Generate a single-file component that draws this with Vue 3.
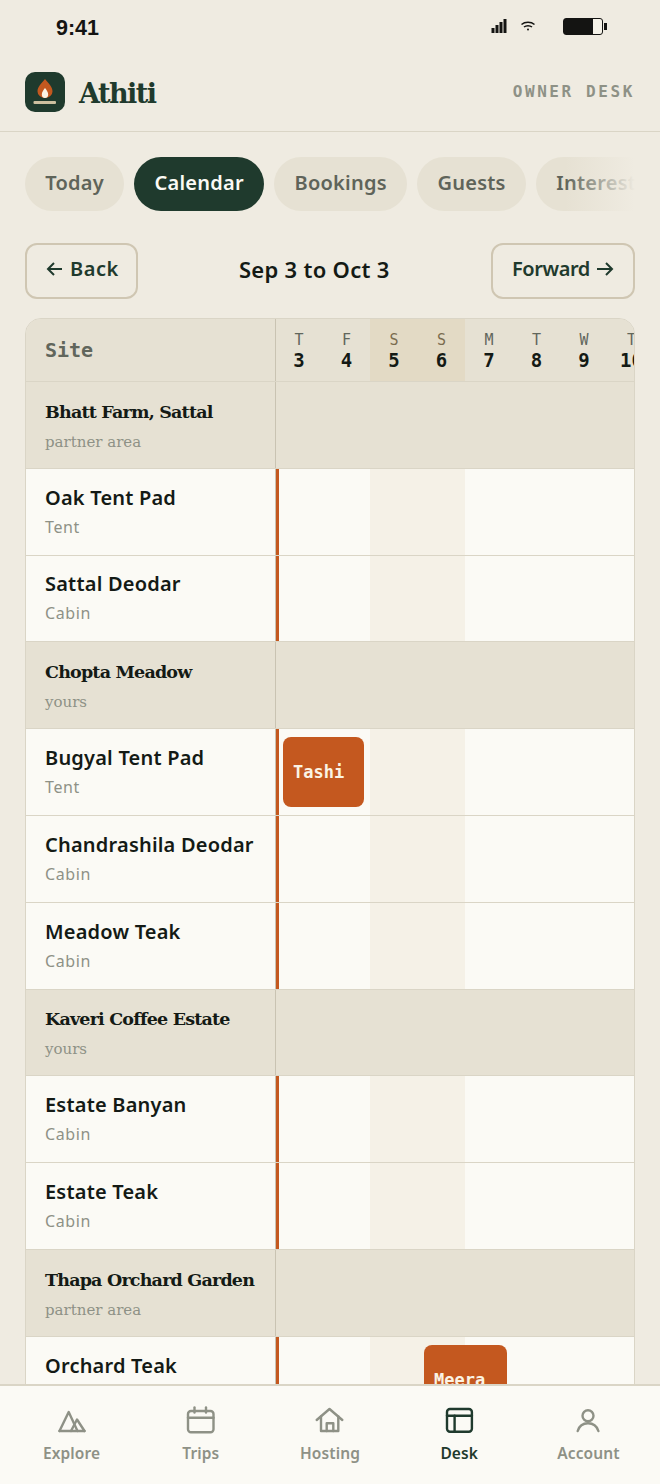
<template>
  <div class="screen">
    <div class="status">
      <span class="time">9:41</span>
      <div class="status-icons">
        <svg class="signal" width="16" height="16" viewBox="0 0 16 16"><path d="M.5 10h3v5h-3zM4.500 7h3v8h-3zM8.500 4h3v11h-3zM12.500 1h3v14h-3z" fill="#141412"/></svg>
        <svg class="wifi" width="16" height="12" viewBox="0 0 16 12" fill="none" stroke="#141412" stroke-width="1.500"><path d="M1.500 4.500c3.500-3 9.500-3 13 0M4 7c2.200-1.800 5.800-1.800 8 0"/><circle cx="8" cy="9.500" r="1" fill="#141412" stroke="none"/></svg>
        <div class="battery"><div class="battery-fill"></div></div>
      </div>
    </div>

    <header class="topbar">
      <div class="brand">
        <div class="logo">
          <svg width="40" height="40" viewBox="0 0 40 40">
            <path d="M20 7c3.800 4.500 7.500 8 7.500 12.500a7.500 6.500 0 0 1-15 0C12.500 15 16.200 11.500 20 7z" fill="#c4581f"/>
            <path d="M20 16c1.600 2.200 3.200 4 3.200 6.500a3.200 3.500 0 0 1-6.400 0c0-2.500 1.600-4.300 3.200-6.500z" fill="#fbf3e4"/>
            <rect x="8.500" y="29" width="22.500" height="3" rx="1" fill="#cdbf9f"/>
          </svg>
        </div>
        <span class="brand-name">Athiti</span>
      </div>
      <span class="owner">OWNER DESK</span>
    </header>

    <div class="tabs">
      <button v-for="t in tabs" :key="t" class="tab" :class="{ active: t === 'Calendar' }">{{ t }}</button>
      <div class="tabs-fade"></div>
    </div>

    <div class="range">
      <button class="range-btn back">
        <svg width="16" height="16" viewBox="0 0 16 16" fill="none" stroke="#1f3a2d" stroke-width="2"><path d="M16 8H2M8 2 2 8l6 6"/></svg>
        <span>Back</span>
      </button>
      <span class="range-title">Sep 3 to Oct 3</span>
      <button class="range-btn forward">
        <span>Forward</span>
        <svg width="17" height="16" viewBox="0 0 17 16" fill="none" stroke="#1f3a2d" stroke-width="2"><path d="M0 8h15M9 2l6 6-6 6"/></svg>
      </button>
    </div>

    <div class="grid">
      <div class="row head">
        <div class="site site-head">Site</div>
        <div class="days">
          <div v-for="d in days" :key="d.n" class="day" :class="{ weekend: d.weekend }">
            <span class="dow">{{ d.dow }}</span>
            <span class="num">{{ d.n }}</span>
          </div>
        </div>
      </div>

      <template v-for="r in rows" :key="r.name">
        <div v-if="r.group" class="row group">
          <div class="site">
            <div class="group-name">{{ r.name }}</div>
            <div class="group-sub">{{ r.sub }}</div>
          </div>
          <div class="cells"></div>
        </div>
        <div v-else class="row unit">
          <div class="site">
            <div class="unit-name">{{ r.name }}</div>
            <div class="unit-sub">{{ r.sub }}</div>
          </div>
          <div class="cells today">
            <div class="weekend-band"></div>
            <div v-if="r.booking" class="booking" :class="r.booking.cls">{{ r.booking.name }}</div>
          </div>
        </div>
      </template>
    </div>

    <nav class="bottom-nav">
      <div v-for="n in nav" :key="n.label" class="nav-item" :class="{ on: n.on }">
        <svg width="32" height="32" viewBox="0 0 32 32" fill="none" stroke="currentColor" stroke-width="2.400" stroke-linejoin="round" stroke-linecap="round">
          <path v-for="(p, i) in n.paths" :key="i" :d="p"/>
        </svg>
        <span>{{ n.label }}</span>
      </div>
    </nav>
  </div>
</template>

<script setup>
const tabs = ['Today', 'Calendar', 'Bookings', 'Guests', 'Interest']

const days = [
  { dow: 'T', n: 3 },
  { dow: 'F', n: 4 },
  { dow: 'S', n: 5, weekend: true },
  { dow: 'S', n: 6, weekend: true },
  { dow: 'M', n: 7 },
  { dow: 'T', n: 8 },
  { dow: 'W', n: 9 },
  { dow: 'T', n: 10 },
]

const rows = [
  { group: true, name: 'Bhatt Farm, Sattal', sub: 'partner area' },
  { name: 'Oak Tent Pad', sub: 'Tent' },
  { name: 'Sattal Deodar', sub: 'Cabin' },
  { group: true, name: 'Chopta Meadow', sub: 'yours' },
  { name: 'Bugyal Tent Pad', sub: 'Tent', booking: { name: 'Tashi', cls: 'tashi' } },
  { name: 'Chandrashila Deodar', sub: 'Cabin' },
  { name: 'Meadow Teak', sub: 'Cabin' },
  { group: true, name: 'Kaveri Coffee Estate', sub: 'yours' },
  { name: 'Estate Banyan', sub: 'Cabin' },
  { name: 'Estate Teak', sub: 'Cabin' },
  { group: true, name: 'Thapa Orchard Garden', sub: 'partner area' },
  { name: 'Orchard Teak', sub: 'Cabin', booking: { name: 'Meera', cls: 'meera' } },
]

const nav = [
  { label: 'Explore', paths: ['M3.500 26 12.700 7 21.500 26', 'M3.500 26h25', 'M15 26 21 14.500 28.500 26'] },
  { label: 'Trips', paths: ['M6 6h19.500a3 3 0 0 1 3 3v15.300a3 3 0 0 1-3 3H6a3 3 0 0 1-3-3V9a3 3 0 0 1 3-3z', 'M3 12.700h25.500', 'M9.500 2.500v5', 'M21 2.500v5'] },
  { label: 'Hosting', paths: ['M2.700 15 15.500 4l12.800 11', 'M7 11.500V26h17.300V11.500', 'M12.700 26v-7.700h6.600V26'] },
  { label: 'Desk', on: true, paths: ['M7 4h18.900a3 3 0 0 1 3 3v16.700a3 3 0 0 1-3 3H7a3 3 0 0 1-3-3V7a3 3 0 0 1 3-3z', 'M4 10.700h24.900', 'M11.600 10.700v16'] },
  { label: 'Account', paths: ['M16 5.200a5.500 5.500 0 1 0 0 11 5.500 5.500 0 0 0 0-11z', 'M5.700 26c1.500-5 5.500-7.700 10.300-7.700s8.800 2.700 10.400 7.700'] },
]
</script>

<style scoped>
.screen {
  position: relative;
  width: 660px;
  height: 1484px;
  overflow: hidden;
  background: #efebe1;
  font-family: "Noto Sans", sans-serif;
  color: #141a15;
}

.status {
  height: 56px;
  display: flex;
  align-items: center;
  justify-content: space-between;
  padding: 0 57px 0 56px;
}

.time {
  font-family: "Liberation Sans", sans-serif;
  font-size: 21.500px;
  font-weight: 700;
  color: #141412;
}

.status-icons {
  display: flex;
  align-items: center;
  padding-bottom: 3px;
}

.signal {
  margin-right: 13px;
  margin-top: -2px;
}

.wifi {
  margin-right: 27px;
  margin-top: -2px;
}

.battery {
  position: relative;
  width: 38px;
  height: 15.500px;
  border: 1.500px solid #141412;
  border-radius: 3px;
  background: #f5f2e8;
}

.battery::after {
  content: "";
  position: absolute;
  right: -5px;
  top: 4px;
  width: 3px;
  height: 7px;
  background: #141412;
}

.battery-fill {
  width: 29px;
  height: 100%;
  background: #141412;
}

.topbar {
  height: 76px;
  display: flex;
  align-items: center;
  justify-content: space-between;
  padding: 0 25px 4px;
  border-bottom: 1.500px solid #dad5c6;
  box-sizing: border-box;
}

.brand {
  display: flex;
  align-items: center;
  gap: 14px;
}

.logo {
  width: 40px;
  height: 40px;
  border-radius: 10px;
  background: #1f3a2d;
}

.logo svg {
  display: block;
}

.brand-name {
  padding-top: 3px;
  font-family: "DejaVu Serif", serif;
  font-size: 27px;
  font-weight: 700;
  letter-spacing: -1.500px;
  color: #1f3a2d;
}

.owner {
  font-family: "DejaVu Sans Mono", monospace;
  font-size: 16px;
  font-weight: 700;
  letter-spacing: 2.600px;
  color: #8e9186;
}

.tabs {
  position: relative;
  display: flex;
  gap: 10px;
  margin: 25px 25px 0;
  overflow: hidden;
}

.tab {
  flex: none;
  height: 54px;
  padding: 0 20.250px 3px;
  border: none;
  border-radius: 27px;
  background: #e6e1d3;
  font-family: "Noto Sans", sans-serif;
  font-size: 20px;
  font-weight: 600;
  letter-spacing: 0.250px;
  color: #5f645a;
}

.tab.active {
  background: #1f3a2d;
  color: #fbfaf5;
}

.tabs-fade {
  position: absolute;
  right: 0;
  top: 0;
  bottom: 0;
  width: 70px;
  background: linear-gradient(to right, rgba(239, 235, 225, 0), #efebe1);
}

.range {
  display: flex;
  align-items: center;
  justify-content: space-between;
  margin: 32px 25px 0;
}

.range-btn {
  display: flex;
  align-items: center;
  gap: 8px;
  height: 56px;
  padding: 0 19px 5px;
  border: 2px solid #cfc6b2;
  border-radius: 12px;
  background: transparent;
  font-family: "Noto Sans", sans-serif;
  font-size: 20px;
  font-weight: 600;
  letter-spacing: 0.500px;
  color: #1f3a2d;
}

.range-btn.back {
  padding-right: 17px;
}

.range-btn.forward {
  gap: 7px;
  letter-spacing: -0.400px;
}

.range-title {
  padding-bottom: 5px;
  font-size: 22px;
  font-weight: 600;
  letter-spacing: 0.300px;
  color: #141a15;
}

.grid {
  margin: 19px 25px 0;
  border: 1px solid #dad5c6;
  border-radius: 16px 16px 0 0;
  overflow: hidden;
}

.row {
  display: flex;
  box-sizing: border-box;
  height: 86.800px;
  border-bottom: 1.500px solid #dad5c6;
}

.row.head {
  height: 63px;
  background: #e6e1d3;
}

.site {
  flex: none;
  width: 250px;
  box-sizing: border-box;
  padding: 0 0 0 19px;
  border-right: 1.500px solid #c9c3b2;
  display: flex;
  flex-direction: column;
  justify-content: center;
  gap: 5px;
}

.site-head {
  font-family: "DejaVu Sans Mono", monospace;
  font-size: 20px;
  font-weight: 700;
  color: #61665c;
}

.days {
  display: flex;
  margin-left: -0.750px;
}

.day {
  flex: none;
  width: 47.500px;
  display: flex;
  flex-direction: column;
  align-items: center;
  justify-content: center;
  line-height: 20px;
}

.day.weekend {
  background: #e3dac5;
}

.day.weekend .dow {
  color: #7a6c4f;
}

.dow {
  font-family: "DejaVu Sans Mono", monospace;
  font-size: 15px;
  color: #61665c;
}

.num {
  font-family: "DejaVu Sans Mono", monospace;
  font-size: 19px;
  font-weight: 700;
  color: #141a15;
}

.group {
  background: #e6e1d3;
}

.group .site {
  gap: 11px;
  padding-top: 3px;
}

.group-name {
  font-family: "DejaVu Serif", serif;
  font-size: 17.500px;
  font-weight: 700;
  letter-spacing: -0.800px;
  color: #141a15;
}

.group-sub {
  font-family: "DejaVu Serif", serif;
  font-size: 15px;
  color: #8e9186;
}

.unit {
  background: #fbfaf5;
}

.unit .site {
  padding-bottom: 2px;
}

.unit-name {
  font-size: 20px;
  font-weight: 600;
  letter-spacing: 0.200px;
  color: #141a15;
}

.unit-sub {
  font-size: 16px;
  letter-spacing: 0.600px;
  color: #8e9186;
}

.cells {
  position: relative;
  flex: 1;
}

.cells.today {
  border-left: 3px solid #c4581f;
}

.weekend-band {
  position: absolute;
  left: 91px;
  top: 0;
  bottom: 0;
  width: 95px;
  background: #f5f1e7;
}

.booking {
  position: absolute;
  top: 8px;
  height: 70px;
  box-sizing: border-box;
  border-radius: 8px;
  background: #c4581f;
  color: #fbf3e4;
  font-family: "DejaVu Sans Mono", monospace;
  font-size: 17px;
  font-weight: 700;
  display: flex;
  align-items: center;
  padding-left: 10px;
}

.booking.tashi {
  left: 4px;
  width: 81px;
}

.booking.meera {
  left: 145px;
  width: 83px;
}

.bottom-nav {
  position: absolute;
  left: 0;
  right: 0;
  bottom: 0;
  height: 100px;
  box-sizing: border-box;
  border-top: 2px solid #dad5c6;
  background: #fbfaf5;
  display: flex;
  padding: 19px 7px 0;
}

.nav-item {
  flex: 1;
  display: flex;
  flex-direction: column;
  align-items: center;
  gap: 5px;
  color: #8e9186;
  font-size: 15.500px;
  font-weight: 600;
  letter-spacing: 0.100px;
}

.nav-item.on {
  color: #1f3a2d;
}
</style>
